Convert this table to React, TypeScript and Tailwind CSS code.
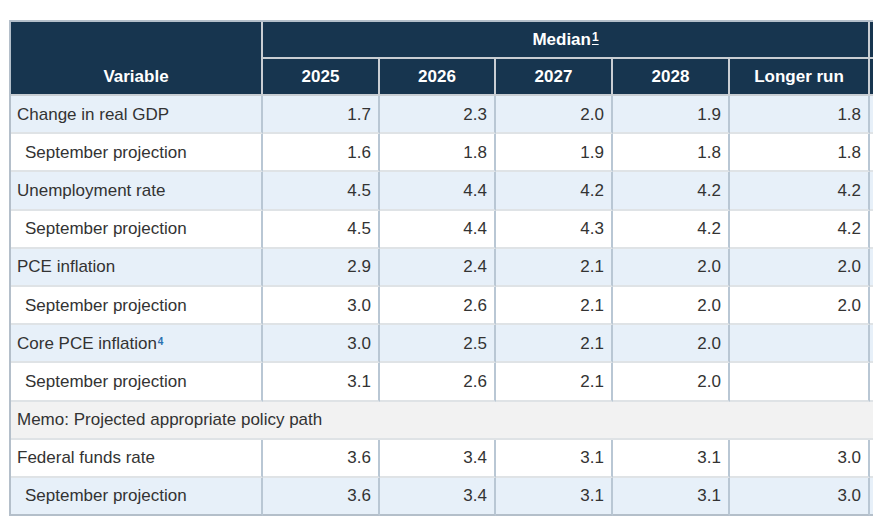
import React from 'react';

type Row = {
  label: string;
  values: string[];
  sub?: boolean;
  tone: 'blue' | 'white' | 'gray';
  note?: string;
  memo?: boolean;
};

const rows: Row[] = [
  { label: 'Change in real GDP', values: ['1.7', '2.3', '2.0', '1.9', '1.8'], tone: 'blue' },
  { label: 'September projection', values: ['1.6', '1.8', '1.9', '1.8', '1.8'], sub: true, tone: 'white' },
  { label: 'Unemployment rate', values: ['4.5', '4.4', '4.2', '4.2', '4.2'], tone: 'blue' },
  { label: 'September projection', values: ['4.5', '4.4', '4.3', '4.2', '4.2'], sub: true, tone: 'white' },
  { label: 'PCE inflation', values: ['2.9', '2.4', '2.1', '2.0', '2.0'], tone: 'blue' },
  { label: 'September projection', values: ['3.0', '2.6', '2.1', '2.0', '2.0'], sub: true, tone: 'white' },
  { label: 'Core PCE inflation', note: '4', values: ['3.0', '2.5', '2.1', '2.0', ''], tone: 'blue' },
  { label: 'September projection', values: ['3.1', '2.6', '2.1', '2.0', ''], sub: true, tone: 'white' },
  { label: 'Memo: Projected appropriate policy path', values: [], tone: 'gray', memo: true },
  { label: 'Federal funds rate', values: ['3.6', '3.4', '3.1', '3.1', '3.0'], tone: 'white' },
  { label: 'September projection', values: ['3.6', '3.4', '3.1', '3.1', '3.0'], sub: true, tone: 'blue' },
];

const years = ['2025', '2026', '2027', '2028', 'Longer run'];

const toneClass = {
  blue: 'bg-[#e7f0f9]',
  white: 'bg-white',
  gray: 'bg-[#f2f2f2]',
};

const App: React.FC = () => {
  return (
    <div
      className="w-[873px] h-[523px] overflow-hidden bg-white pt-5 pl-[9px] text-[#333]"
      style={{ fontFamily: '"Liberation Sans", Arial, sans-serif' }}
    >
      <table className="border-separate border-spacing-0 table-fixed w-[1060px] text-[17px] leading-none border-l-2 border-t-2 border-[#b4bfca]">
        <colgroup>
          <col className="w-[252px]" />
          <col className="w-[117px]" />
          <col className="w-[116px]" />
          <col className="w-[117px]" />
          <col className="w-[117px]" />
          <col className="w-[140px]" />
          <col className="w-[201px]" />
        </colgroup>
        <thead>
          <tr className="h-[37px]">
            <th
              rowSpan={2}
              className="bg-[#17354f] text-white font-bold align-bottom pb-[9px] border-r-2 border-b-2 border-[#c9ced3]"
            >
              Variable
            </th>
            <th
              colSpan={5}
              className="bg-[#17354f] text-white font-bold border-r-2 border-b-2 border-[#c9ced3]"
            >
              Median
              <sup className="text-[12px] underline underline-offset-[3px] relative -top-[4px] ml-[1px]">1</sup>
            </th>
            <th className="bg-[#17354f] border-r-2 border-b-2 border-[#c9ced3]"></th>
          </tr>
          <tr className="h-[37px]">
            {years.map((y) => (
              <th
                key={y}
                className="bg-[#17354f] text-white font-bold border-r-2 border-b-2 border-[#c9ced3]"
              >
                {y}
              </th>
            ))}
            <th className="bg-[#17354f] border-r-2 border-b-2 border-[#c9ced3]"></th>
          </tr>
        </thead>
        <tbody>
          {rows.map((r, i) => {
            const last = i === rows.length - 1;
            const bottom = last ? 'border-b-2 border-b-[#b4bfca]' : 'border-b-2 border-b-[#dfe3e6]';
            if (r.memo) {
              return (
                <tr key={i} className={`h-[38.2px] ${toneClass[r.tone]}`}>
                  <td colSpan={7} className={`pl-[6px] border-r-2 border-r-[#b9c7d4] ${bottom}`}>
                    {r.label}
                  </td>
                </tr>
              );
            }
            return (
              <tr key={i} className={`h-[38.2px] ${toneClass[r.tone]}`}>
                <td className={`${r.sub ? 'pl-[14px]' : 'pl-[6px]'} border-r-2 border-r-[#b9c7d4] ${bottom}`}>
                  {r.label}
                  {r.note && (
                    <sup className="text-[10px] font-bold text-[#2a6fb0] relative -top-[4px] ml-[1px]">{r.note}</sup>
                  )}
                </td>
                {years.map((_, j) => (
                  <td key={j} className={`text-right pr-[7px] border-r-2 border-r-[#b9c7d4] ${bottom}`}>
                    {r.values[j]}
                  </td>
                ))}
                <td className={`border-r-2 border-r-[#b9c7d4] ${bottom}`}></td>
              </tr>
            );
          })}
        </tbody>
      </table>
    </div>
  );
};

export default App;
